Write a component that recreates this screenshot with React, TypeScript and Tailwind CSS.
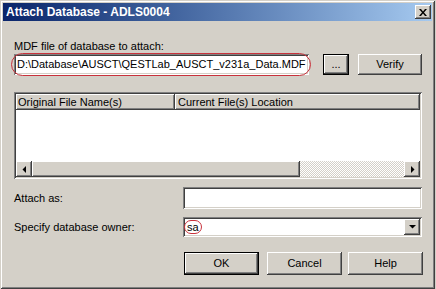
import React from 'react';

// win2000 bevels
const frame = 'shadow-[inset_1px_1px_0_#d4d0c8,inset_-1px_-1px_0_#404040,inset_2px_2px_0_#ffffff,inset_-2px_-2px_0_#808080]';
const raised = 'shadow-[inset_-1px_-1px_0_#404040,inset_1px_1px_0_#ffffff,inset_-2px_-2px_0_#808080,inset_2px_2px_0_#d4d0c8]';
const sunken = 'shadow-[inset_1px_1px_0_#808080,inset_-1px_-1px_0_#ffffff,inset_2px_2px_0_#404040,inset_-2px_-2px_0_#d4d0c8]';

const Arrow = ({ dir }: { dir: 'left' | 'right' | 'down' }) => {
  const pts = dir === 'left' ? '4,0 4,7 0.5,3.5' : dir === 'right' ? '0,0 0,7 3.5,3.5' : '0,0 7,0 3.5,3.5';
  const w = dir === 'down' ? 7 : 4;
  const h = dir === 'down' ? 4 : 7;
  return (
    <svg width={w} height={h} viewBox={`0 0 ${w} ${h}`}>
      <polygon points={pts} fill="#000" />
    </svg>
  );
};

const Button = ({ label, width, dark, className = '' }: { label: string; width: string; dark?: boolean; className?: string }) => (
  <div
    className={`${width} h-full flex items-center justify-center bg-[#d4d0c8] ${raised} ${dark ? 'border border-black' : ''} ${className}`}
  >
    {label}
  </div>
);

export default function App() {
  return (
    <div className="w-[436px] h-[289px] bg-[#d4d0c8] overflow-hidden text-[11px] text-black font-['Liberation_Sans',Arial,sans-serif]">
      <div className={`w-[435px] h-[289px] p-[3px] flex flex-col ${frame}`}>
        {/* Title bar */}
        <div className="h-[18px] flex items-center justify-between pl-[3px] pr-[1px] bg-gradient-to-r from-[#0a246a] to-[#a6caf0]">
          <span className="text-white font-bold text-[12px] leading-none">Attach Database - ADLS0004</span>
          <div className={`w-[16px] h-[14px] bg-[#d4d0c8] flex items-center justify-center ${raised}`}>
            <svg width="8" height="7" viewBox="0 0 8 7">
              <path d="M0 0h2l2 2.5L6 0h2L5 3.5 8 7H6L4 4.5 2 7H0l3-3.5z" fill="#000" />
            </svg>
          </div>
        </div>

        {/* Client area */}
        <div className="flex-1 pt-[19px] pl-[11px] flex flex-col">
          <div className="h-[13px] leading-[13px]">MDF file of database to attach:</div>

          <div className="mt-[1px] h-[21px] flex">
            <div className={`relative w-[295px] h-full bg-white pl-[3px] leading-[21px] ${sunken}`}>
              D:\Database\AUSCT\QESTLab_AUSCT_v231a_Data.MDF
              <div className="absolute -left-[3px] -right-[2px] -top-[1px] -bottom-[1px] rounded-full border border-[#c8323c]" />
            </div>
            <Button label="..." width="w-[26px]" dark className="ml-[14px]" />
            <Button label="Verify" width="w-[64px]" className="ml-[9px]" />
          </div>

          {/* List view */}
          <div className={`mt-[17px] w-[408px] h-[87px] p-[2px] bg-white flex flex-col ${sunken}`}>
            <div className="h-[16px] flex leading-[16px]">
              <div className={`w-[159px] pl-[2px] bg-[#d4d0c8] ${raised}`}>Original File Name(s)</div>
              <div className={`flex-1 pl-[3px] bg-[#d4d0c8] ${raised}`}>Current File(s) Location</div>
            </div>
            <div className="flex-1 bg-white" />
            <div className="h-[16px] flex">
              <div className={`w-[16px] h-full bg-[#d4d0c8] flex items-center justify-center ${raised}`}>
                <Arrow dir="left" />
              </div>
              <div className={`w-[268px] h-full bg-[#d4d0c8] ${raised}`} />
              <div className="flex-1 h-full bg-[repeating-conic-gradient(#ffffff_0_25%,#d4d0c8_0_50%)] bg-[length:2px_2px]" />
              <div className={`w-[16px] h-full bg-[#d4d0c8] flex items-center justify-center pl-[1px] ${raised}`}>
                <Arrow dir="right" />
              </div>
            </div>
          </div>

          <div className="mt-[8px] h-[22px] flex items-center">
            <div className="w-[169px]">Attach as:</div>
            <div className={`w-[239px] h-full bg-white ${sunken}`} />
          </div>

          <div className="mt-[8px] h-[20px] flex items-center">
            <div className="w-[169px]">Specify database owner:</div>
            <div className={`w-[239px] h-full bg-white p-[2px] flex ${sunken}`}>
              <div className="flex-1 relative pl-[2px] leading-[16px]">
                <span className="relative">
                  sa
                  <span className="absolute -left-[3px] -right-[3px] -top-[1px] -bottom-[1px] rounded-full border border-[#c8323c]" />
                </span>
              </div>
              <div className={`w-[16px] h-full bg-[#d4d0c8] flex items-center justify-center ${raised}`}>
                <Arrow dir="down" />
              </div>
            </div>
          </div>

          <div className="mt-[15px] h-[23px] flex pl-[170px]">
            <Button label="OK" width="w-[75px]" dark />
            <Button label="Cancel" width="w-[75px]" className="ml-[8px]" />
            <Button label="Help" width="w-[75px]" className="ml-[6px]" />
          </div>
        </div>
      </div>
    </div>
  );
}
